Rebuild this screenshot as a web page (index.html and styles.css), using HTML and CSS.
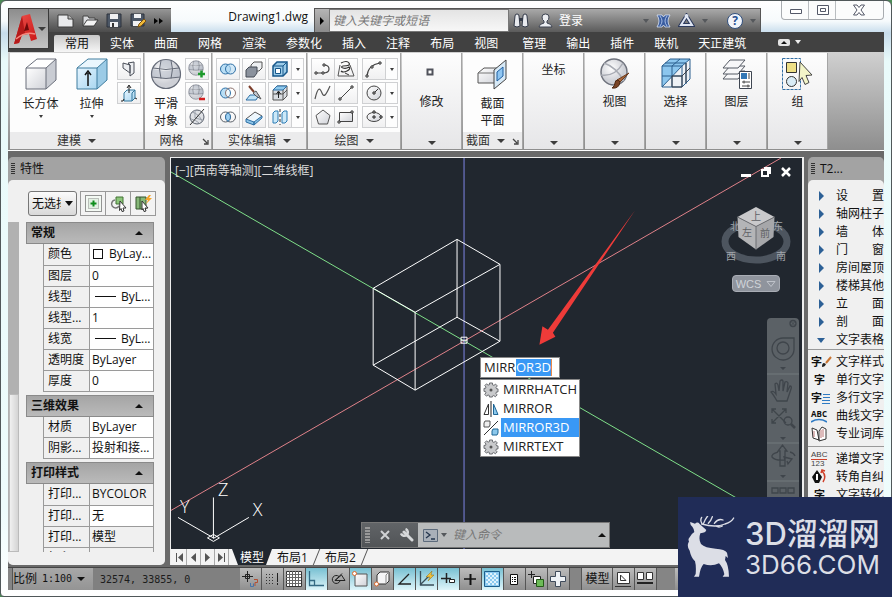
FILE: index.html
```html
<!DOCTYPE html>
<html lang="zh-CN">
<head>
<meta charset="utf-8">
<title>Drawing1.dwg</title>
<link rel="stylesheet" href="styles.css">
</head>
<body>
<svg class="defs" aria-hidden="true">
  <defs>
    <linearGradient id="gray" x1="0" y1="0" x2="1" y2="1"><stop offset="0" stop-color="#fff"/><stop offset="1" stop-color="#d0d2d8"/></linearGradient>
    <linearGradient id="blue" x1="0" y1="0" x2="1" y2="1"><stop offset="0" stop-color="#e6f5ff"/><stop offset="1" stop-color="#a9d6f0"/></linearGradient>
    <linearGradient id="red" x1="0" y1="0" x2="1" y2="1"><stop offset="0" stop-color="#f0554f"/><stop offset="1" stop-color="#c81414"/></linearGradient>
    <radialGradient id="ball" cx=".4" cy=".35"><stop offset="0" stop-color="#fff"/><stop offset="1" stop-color="#ced0d6"/></radialGradient>
    <symbol id="mesh" viewBox="0 0 32 32">
      <circle cx="16" cy="16" r="14.5" fill="url(#ball)"/>
      <path d="M11 2h10l1 8q-6 1-12 0zM2 11q4 1 8 1v8q-5 0-8-2zM30 11q-4 1-8 1v8q5 0 8-2zM10 12q6 1 12 0v8q-6 1-12 0z" fill="#b4bac6" opacity=".6"/>
      <path d="M3 10q13 3 26 0M1.500 19q14.500 3 29 0M11 2.500q-3 8 0 18M21 2.500q3 8 0 18" fill="none" stroke="#666c79"/>
      <circle cx="16" cy="16" r="14.500" fill="none" stroke="#666c79" stroke-width="1.200"/>
    </symbol>
    <symbol id="gear" viewBox="0 0 16 16">
      <path d="M6.500 1h3v1.800l1.500.6 1.500-1.300 1.800 1.800-1.300 1.600.6 1.400H15v3h-1.500l-.6 1.500 1.300 1.500-1.900 1.900-1.500-1.300-1.400.6V15h-3v-1.500L5 12.900l-1.500 1.300-1.800-1.900L3 10.900l-.6-1.500H1v-3h1.500L3 5 1.800 3.600l1.800-1.800L5 3.200l1.500-.6z" fill="#c9cacc" stroke="#6c6e72"/>
      <circle cx="8" cy="8" r="1.500" fill="#555"/>
    </symbol>
  </defs>
</svg>

<div class="window">
  <header class="top">
    <button class="app-button" aria-label="应用程序菜单">
      <svg width="25" height="32" viewBox="0 0 25 32"><path d="M1 31 9 3l8-2 7 25-6 2-2-7-7 1-3 8z" fill="url(#red)"/><path d="M9 3 12 20l-3 2-3 8-5 1z" fill="#b51a1a"/><path d="M11 18l3-9 2 8z" fill="#6e0a0a"/><path d="M3 26q9-8 19-5" fill="none" stroke="#f58a80" stroke-width="1.500"/></svg>
      <i class="down"></i>
    </button>
    <div class="titlebar">
      <div class="quick">
        <button aria-label="新建"><svg width="17" height="15" viewBox="0 0 17 15"><path d="M1 2h10l5 4v8H1z" fill="#e9eaec" stroke="#3c3c3c"/><path d="M11 2v4h5" fill="#bbb" stroke="#3c3c3c"/></svg></button>
        <button aria-label="打开"><svg width="17" height="15" viewBox="0 0 17 15"><path d="M1 13V3h5l1 2h6v2l3 0-4 6z" fill="#d9dadd" stroke="#444"/><path d="M1 13 5 7h11l-4 6z" fill="#f3f3f3" stroke="#444"/></svg></button>
        <button aria-label="保存"><svg width="16" height="15" viewBox="0 0 16 15"><path d="M1 1h14v13H1z" fill="#4c5766" stroke="#2d333c"/><path d="M4 1h8v5H4zM4 9h8v5H4z" fill="#f0f1f3"/><path d="M6 10h2v4H6z" fill="#333"/></svg></button>
        <button aria-label="另存为"><svg width="17" height="15" viewBox="0 0 17 15"><path d="M1 1h13v12H1z" fill="#4c5766" stroke="#2d333c"/><path d="M4 1h7v4H4zM3 8h9v5H3z" fill="#f0f1f3"/><path d="M8 14l1-3 5-5 2 2-5 5z" fill="#f0b93a" stroke="#7c5310"/></svg></button>
        <button aria-label="更多"><svg width="9" height="8" viewBox="0 0 9 8"><path d="M0 1l4 3-4 3zM5 1l4 3-4 3z" fill="#050505"/></svg></button>
      </div>
      <h1>Drawing1.dwg</h1>
      <div class="info">
        <button class="flyout" aria-label="展开搜索"><svg width="6" height="8" viewBox="0 0 6 8"><path d="M1 0l4 4-4 4z" fill="#000"/></svg></button>
        <input class="search" type="text" aria-label="搜索" placeholder="键入关键字或短语">
        <div class="account">
          <button aria-label="搜索"><svg width="16" height="15" viewBox="0 0 16 15"><path d="M2 3q0-2 2-2t2 2l1 10q-3 2-6 0zM10 3q0-2 2-2t2 2l1 10q-3 2-6 0z" fill="#e8eaee" stroke="#333a48"/><path d="M6 5h4v3H6z" fill="#333a48"/></svg></button>
          <button class="login"><svg width="15" height="15" viewBox="0 0 15 15"><path d="M1 14q0-3 5-4V8Q4 7 4 4q0-3 3.500-3T11 4q0 3-2 4v2q5 1 5 4z" fill="#eceef2" stroke="#3c4250"/></svg><span>登录</span></button>
          <i class="down dim far"></i>
          <button aria-label="Exchange"><svg width="15" height="14" viewBox="0 0 15 14"><path d="M1 1h5l1.500 2L9 1h5q-4 6 0 12H9l-1.500-2L6 13H1q4-6 0-12z" fill="#3a5da0" stroke="#dbe4f5" stroke-width=".8"/><path d="M4 2q4 5 0 10M11 2q-4 5 0 10" fill="none" stroke="#a9bfe6"/></svg></button>
          <button aria-label="联机"><svg width="17" height="15" viewBox="0 0 17 15"><path d="M8.500 3 3 12h11z" fill="none" stroke="#2c3a5d" stroke-width="4"/><path d="M8.500 3 3 12h11z" fill="none" stroke="#dfe5f2" stroke-width="2"/><circle cx="8.500" cy="3" r="2" fill="#dfe5f2"/></svg></button>
          <i class="down dim"></i>
          <button class="help" aria-label="帮助">?</button>
          <i class="down dim"></i>
        </div>
      </div>
      <div class="caption-buttons">
        <button aria-label="最小化"><svg width="14" height="12" viewBox="0 0 14 12"><path d="M1.500 5.500h11v4h-11z" fill="#fff" stroke="#545968"/></svg></button>
        <button aria-label="还原"><svg width="14" height="12" viewBox="0 0 14 12"><path d="M1.500 1.500h11v9h-11z" fill="#fff" stroke="#545968"/><path d="M4.500 4.500h5v3h-5z" fill="#fff" stroke="#545968"/></svg></button>
        <button class="wide" aria-label="关闭"><svg width="14" height="12" viewBox="0 0 14 12"><path d="M1.500 1h3.500l2 2.500L9 1h3.500L9 6l3.500 5H9L7 8.500 5 11H1.500L5 6z" fill="#fff" stroke="#545968"/></svg></button>
      </div>
    </div>
    <nav class="tabs">
      <a class="on" href="#">常用</a><a href="#">实体</a><a href="#">曲面</a><a href="#">网格</a><a href="#">渲染</a><a href="#">参数化</a><a href="#">插入</a><a href="#">注释</a><a href="#">布局</a><a href="#">视图</a><a class="gap" href="#">管理</a><a href="#">输出</a><a href="#">插件</a><a href="#">联机</a><a href="#">天正建筑</a>
      <button class="collapse" aria-label="最小化功能区"><span><i class="up"></i></span><i class="down light"></i></button>
    </nav>
  </header>

  <div class="ribbon">
    <section class="panel p-model">
      <div class="tools">
        <button class="big"><svg width="32" height="32" viewBox="0 0 32 32"><path d="M1 10 12 1h19L21 10z" fill="#fff"/><path d="M1 10h20v21H1z" fill="url(#gray)"/><path d="M21 10 31 1v21L21 31z" fill="#c9ccd3"/><path d="M1 10 12 1h19v21L21 31H1zM1 10h20M21 10 31 1M21 10v21" fill="none" stroke="#6a6f7b"/></svg><span>长方体</span><i class="down"></i></button>
        <button class="big"><svg width="32" height="32" viewBox="0 0 32 32"><path d="M1 10 12 1h19L21 10z" fill="#eaf6fd"/><path d="M1 10h20v21H1z" fill="url(#blue)"/><path d="M21 10 31 1v21L21 31z" fill="#9ccbe6"/><path d="M1 10 12 1h19v21L21 31H1zM1 10h20M21 10 31 1M21 10v21" fill="none" stroke="#3f7d9f"/><path d="M12 28V15M9 17l3-4 3 4" fill="none" stroke="#111" stroke-width="1.500"/></svg><span>拉伸</span><i class="down"></i></button>
        <div class="col">
          <button class="sm" aria-label="多段体"><svg width="18" height="18" viewBox="0 0 18 18"><path d="M3 3l7 2v8l-7-5zM8 3l6-1v11l-4 3V5z" fill="#eceef1" stroke="#4a4f59"/></svg></button>
          <button class="sm" aria-label="按住并拖动"><svg width="18" height="18" viewBox="0 0 18 18"><path d="M4 9l3-3h8v8l-3 3H4z" fill="url(#blue)" stroke="#33779c"/><path d="M12 17V9l3-3" fill="none" stroke="#33779c"/><path d="M1 17h2l1-2M17 15l-2-1M9 9V2M7 4l2-3 2 3" fill="none" stroke="#222"/></svg></button>
        </div>
      </div>
      <footer><span>建模</span><i class="down"></i></footer>
    </section>
    <section class="panel p-mesh">
      <div class="tools">
        <button class="big"><svg width="32" height="32"><use href="#mesh"/></svg><span>平滑</span><span>对象</span></button>
        <div class="col">
          <button class="sm" aria-label="提高平滑度"><svg width="18" height="18" viewBox="0 0 18 18"><use href="#mesh" width="16" height="16"/><path d="M10 14h7M13.500 10.500v7" stroke="#1d9a2c" stroke-width="2.500"/></svg></button>
          <button class="sm" aria-label="降低平滑度"><svg width="18" height="18" viewBox="0 0 18 18"><use href="#mesh" width="16" height="16"/><path d="M11 15h6" stroke="#d32020" stroke-width="2.500"/></svg></button>
          <button class="sm" aria-label="优化网格"><svg width="18" height="18" viewBox="0 0 18 18"><circle cx="9" cy="9" r="7" fill="#dfe1e5" stroke="#59606c"/><path d="M4 4q7 2 10 9M3 11q5 1 8 4M7 2v8l8 2" fill="none" stroke="#9ba1ab"/><path d="M2 17 16 1" stroke="#333"/></svg></button>
        </div>
      </div>
      <footer><span>网格</span><svg class="corner" width="7" height="7" viewBox="0 0 7 7"><path d="M1 1l4 4M6 2v4H2" fill="none" stroke="#444" stroke-width="1.300"/></svg></footer>
    </section>
    <section class="panel p-solid">
      <div class="tools">
        <div class="col">
          <button class="sm" aria-label="并集"><svg width="18" height="18" viewBox="0 0 18 18"><g fill="#b9def5" stroke="#2d6fa5"><circle cx="6.500" cy="9" r="5"/><circle cx="11.500" cy="9" r="5" fill-opacity=".6"/></g></svg></button>
          <button class="sm" aria-label="差集"><svg width="18" height="18" viewBox="0 0 18 18"><circle cx="6.500" cy="9" r="5" fill="#b9def5" stroke="#2d6fa5"/><circle cx="11.500" cy="9" r="5" fill="#fff" fill-opacity=".8" stroke="#8a6f6a"/><path d="M9 4.700a5 5 0 0 1 0 8.600" fill="none" stroke="#2d6fa5"/></svg></button>
          <button class="sm" aria-label="交集"><svg width="18" height="18" viewBox="0 0 18 18"><g fill="none" stroke="#5a6068"><circle cx="6.500" cy="9" r="5"/><circle cx="11.500" cy="9" r="5"/></g><path d="M9 4.700a5 5 0 0 1 0 8.600 5 5 0 0 1 0-8.600z" fill="#9dd0f2" stroke="#2d6fa5"/></svg></button>
        </div>
        <div class="col">
          <button class="sm" aria-label="干涉"><svg width="18" height="18" viewBox="0 0 18 18"><path d="M6 5l3-3h8v6l-3 3H6z" fill="#eef0f2" stroke="#555"/><path d="M1 10l3-3h8v6l-3 4H1z" fill="#8b929d" stroke="#454b55"/></svg></button>
          <button class="sm" aria-label="剖切"><svg width="18" height="18" viewBox="0 0 18 18"><path d="M1 16l4-5h9l-3 5z" fill="#bfe2f6" stroke="#2d6fa5"/><path d="M4 2l5 6" stroke="#7c3d2a" stroke-width="2"/><path d="M8 9l3-2 5 8-5-3z" fill="#c3c8d0" stroke="#555"/></svg></button>
          <button class="sm" aria-label="加厚"><svg width="18" height="18" viewBox="0 0 18 18"><path d="M1 11l9-7 7 4-8 8z" fill="#eef7fd" stroke="#555"/><path d="M1 11v3l8 3v-3zM9 17l8-7V8l-8 6z" fill="#8fc6e8" stroke="#2d6fa5"/></svg></button>
        </div>
        <div class="col">
          <div class="split"><button class="sm" aria-label="抽壳"><svg width="18" height="18" viewBox="0 0 18 18"><path d="M2 6l4-4h10v10l-4 4H2z" fill="#9bcbe8" stroke="#16578a" stroke-width="1.500"/><path d="M4.500 8.500h5v5h-5z" fill="#fff" stroke="#16578a"/><path d="M12 6v10M12 6l4-4M2 6h10" stroke="#16578a"/></svg></button><button class="more" aria-label="更多"><i class="down"></i></button></div>
          <div class="split"><button class="sm" aria-label="拉伸面"><svg width="18" height="18" viewBox="0 0 18 18"><path d="M2 6l4-4h10v10l-4 4H2z" fill="#d9dde2" stroke="#555"/><path d="M2 6l4-4h10l-4 4z" fill="#8fc9ec" stroke="#2d6fa5"/><path d="M2 10h10l4-4M12 6v10" fill="none" stroke="#555"/><path d="M7.500 14V8M5.500 10l2-3 2 3" fill="none" stroke="#222"/></svg></button><button class="more" aria-label="更多"><i class="down"></i></button></div>
          <div class="split"><button class="sm" aria-label="分割"><svg width="18" height="18" viewBox="0 0 18 18"><path d="M2 5l2-2h3v10l-2 2H2zM11 5l2-2h3v10l-2 2h-3z" fill="#cbe8f8" stroke="#2d7db5"/><path d="M9 1v16" stroke="#333" stroke-dasharray="3 2"/></svg></button><button class="more" aria-label="更多"><i class="down"></i></button></div>
        </div>
      </div>
      <footer><span>实体编辑</span><i class="down"></i></footer>
    </section>
    <section class="panel p-draw">
      <div class="tools">
        <div class="col">
          <div class="split"><button class="sm" aria-label="多段线"><svg width="18" height="18" viewBox="0 0 18 18"><path d="M2 13h7q6 0 6-4t-5-4" fill="none" stroke="#444" stroke-width="1.200"/><path d="M1 12h2v2H1zM8 12h2v2H8zM9 4h2v2H9z" fill="#fff" stroke="#333"/></svg></button><button class="sm" aria-label="螺旋"><svg width="18" height="18" viewBox="0 0 18 18"><path d="M3 5l-2 11h16L13 5" fill="none" stroke="#555"/><path d="M4 3q6-3 8 0t-6 3q-3 1 0 2t6-1q2 2-2 4t-6 0" fill="none" stroke="#333" stroke-width="1.200"/><path d="M8 13l4 2" stroke="#333"/></svg></button></div>
          <div class="split"><button class="sm" aria-label="样条曲线"><svg width="18" height="18" viewBox="0 0 18 18"><path d="M1 15C4 2 6 4 8 9s4 2 8-7" fill="none" stroke="#555" stroke-width="1.200"/></svg></button><button class="sm" aria-label="直线"><svg width="18" height="18" viewBox="0 0 18 18"><path d="M3 15 15 3" stroke="#444"/><path d="M2 14h2v2H2zM14 2h2v2h-2z" fill="#fff" stroke="#333"/></svg></button></div>
          <div class="split"><button class="sm" aria-label="多边形"><svg width="18" height="18" viewBox="0 0 18 18"><path d="M9 2l7 5.500L13.500 16h-9L2 7.500z" fill="url(#gray)" stroke="#555"/></svg></button><button class="sm" aria-label="矩形"><svg width="18" height="18" viewBox="0 0 18 18"><path d="M2.500 4.500h13v9h-13z" fill="url(#gray)" stroke="#444"/><path d="M1 13h2v2H1zM14 3h2v2h-2z" fill="#fff" stroke="#333"/></svg></button></div>
        </div>
        <div class="col">
          <div class="split"><button class="sm" aria-label="圆弧"><svg width="18" height="18" viewBox="0 0 18 18"><path d="M2 16Q3 5 15 3" fill="none" stroke="#444" stroke-width="1.200"/><path d="M1 15h2v2H1zM6 6h2v2H6zM14 2h2v2h-2z" fill="#fff" stroke="#333"/></svg></button><button class="more" aria-label="更多"><i class="down"></i></button></div>
          <div class="split"><button class="sm" aria-label="圆"><svg width="18" height="18" viewBox="0 0 18 18"><circle cx="9" cy="9" r="7" fill="url(#gray)" stroke="#444"/><path d="M9 9l4-4" stroke="#333"/><path d="M8 8h2v2H8z" fill="#fff" stroke="#222"/></svg></button><button class="more" aria-label="更多"><i class="down"></i></button></div>
          <div class="split"><button class="sm" aria-label="椭圆"><svg width="18" height="18" viewBox="0 0 18 18"><ellipse cx="9" cy="9" rx="7" ry="4.500" fill="url(#gray)" stroke="#444"/><path d="M9 7v4M7 9h4" stroke="#222"/><path d="M8 3h2v2H8zM15 8h2v2h-2z" fill="#fff" stroke="#222"/></svg></button><button class="more" aria-label="更多"><i class="down"></i></button></div>
        </div>
      </div>
      <footer><span>绘图</span><i class="down"></i></footer>
    </section>
    <section class="panel folded"><button><svg width="32" height="32" viewBox="0 0 32 32"><path d="M11.500 11.500h5v5h-5z" fill="#fff" stroke="#50525b" stroke-width="2"/></svg><span>修改</span><i class="down"></i></button></section>
    <section class="panel p-cut">
      <div class="tools">
        <button class="big"><svg width="32" height="32" viewBox="0 0 32 32"><path d="M1 15l6-5h15v12l-5 3H1z" fill="url(#gray)" stroke="#555"/><path d="M1 15h16" stroke="#777"/><path d="M17 12 29 2v19L17 31z" fill="#d7e9f6" stroke="#444"/><path d="M20 14l6-5v9l-6 5z" fill="#8fc6f2" stroke="#1f5ea0"/></svg><span>截面</span><span>平面</span></button>
      </div>
      <footer><span>截面</span><i class="down"></i><svg class="corner" width="7" height="7" viewBox="0 0 7 7"><path d="M1 1l4 4M6 2v4H2" fill="none" stroke="#444" stroke-width="1.300"/></svg></footer>
    </section>
    <section class="panel folded"><button><span>坐标</span><i class="down"></i></button></section>
    <section class="panel folded"><button><svg width="32" height="32" viewBox="0 0 32 32"><circle cx="15" cy="14" r="13" fill="url(#ball)" stroke="#70747e" stroke-width="1.500"/><path d="M5 5q12 4 20 18M2 17q14 2 22-12" fill="none" stroke="#a8abb3" stroke-width="1.500"/><path d="M30 15l-9 9-3-2z" fill="#a8663a" stroke="#6b3a1c"/><path d="M21 24q-1 7-8 6 3-2 3-5t3-3z" fill="#7a4426" stroke="#4e2912"/></svg><span>视图</span><i class="down"></i></button></section>
    <section class="panel folded"><button><svg width="32" height="32" viewBox="0 0 32 32"><path d="M2 8 10 1h20v20l-8 8H2z" fill="#8cc6ee"/><path d="M22 8 30 1v20l-8 8zM2 29 22 8v21z" fill="#eef1f5"/><path d="M2 8h20v21H2zM2 8l8-7h20v20l-8 8M22 8l8-7M2 18h20l8-8M12 29V8l8-7M5 5h21v21M2 29 22 8" fill="none" stroke="#2b5f8e"/><path d="M12 18h10v11H12zM22 18l8-8M26 5v20" fill="none" stroke="#3b3f47"/></svg><span>选择</span><i class="down"></i></button></section>
    <section class="panel folded"><button><svg width="32" height="32" viewBox="0 0 32 32"><g fill="#f7f7f9" stroke="#555a64"><path d="M2 21l7-8h15l-7 8z"/><path d="M2 16l7-8h15l-7 8z"/><path d="M2 10l7-8h15l-7 8z"/></g><path d="M18.500 13.500h12v17h-12z" fill="#fff" stroke="#3f4652"/><path d="M20 15h6v6h-6z" fill="#3277b5"/><path d="M28 15v6M21 24h8M21 28h8M23 22.500v3M27 26.500v3" stroke="#444"/></svg><span>图层</span><i class="down"></i></button></section>
    <section class="panel folded"><button><svg width="32" height="32" viewBox="0 0 32 32"><path d="M.500 .500h18v31h-18z" fill="none" stroke="#326ea3" stroke-dasharray="3 1"/><path d="M4.500 4.500h10v10h-10z" fill="#eedf86" stroke="#333"/><circle cx="9.500" cy="23.500" r="5" fill="#d9ecf6" stroke="#333"/><path d="M18 4 30 17l-6 .5 3 7-4 2-3-7-3 4z" fill="#f3f5c8" stroke="#444"/></svg><span>组</span><i class="down"></i></button></section>
  </div>

  <main class="work">
    <aside class="palette props">
      <h2><i class="grip"></i>特性</h2>
      <div class="palette-body">
        <div class="prop-tools">
          <label class="pick"><select aria-label="选择对象"><option>无选择</option></select></label>
          <div class="trio">
            <button aria-label="选择"><svg width="17" height="17" viewBox="0 0 17 17"><path d="M.500.500h16v16h-16z" fill="#f3f9f3" stroke="#333" stroke-dasharray="1 1"/><path d="M3.500 3.500h10v10h-10z" fill="#e3f1e3" stroke="#888" stroke-dasharray="1 1"/><path d="M5.500 8.500h6M8.500 5.500v6" stroke="#0e8d1c" stroke-width="2"/></svg></button>
            <button aria-label="快速选择"><svg width="17" height="17" viewBox="0 0 17 17"><path d="M6 2h7v7H6z" fill="#8cc67a" stroke="#427235"/><path d="M5 5a4 4 0 1 0 4 6" fill="none" stroke="#777" stroke-width="1.500"/><path d="M10 6l6 7-3 0 1 3-2 .5-1-3-1.500 2z" fill="#fff" stroke="#333"/></svg></button>
            <button aria-label="选择对象"><svg width="17" height="17" viewBox="0 0 17 17"><path d="M1 2h10v12H1zM5 2v12" fill="#86b878" stroke="#35542d"/><path d="M14 0l-4 5h3l-2 4 6-6h-3l2-3z" fill="#f6a52a"/><path d="M7 6l6 7-3 0 1 3-2 .5-1-3L7 15z" fill="#fff" stroke="#333"/></svg></button>
          </div>
        </div>
        <div class="prop-scroll">
          <div class="scrollbar"><i></i></div>
          <div class="groups">
            <section>
              <h3><button>常规<i class="up"></i></button></h3>
              <table>
                <tr><th>颜色</th><td><i class="swatch"></i>ByLay...</td></tr>
                <tr><th>图层</th><td>0</td></tr>
                <tr><th>线型</th><td><i class="stroke"></i>ByL...</td></tr>
                <tr><th>线型...</th><td>1</td></tr>
                <tr><th>线宽</th><td><i class="stroke"></i>ByL...</td></tr>
                <tr><th>透明度</th><td>ByLayer</td></tr>
                <tr><th>厚度</th><td>0</td></tr>
              </table>
            </section>
            <section>
              <h3><button>三维效果<i class="up"></i></button></h3>
              <table>
                <tr><th>材质</th><td>ByLayer</td></tr>
                <tr><th>阴影...</th><td>投射和接...</td></tr>
              </table>
            </section>
            <section>
              <h3><button>打印样式<i class="up"></i></button></h3>
              <table>
                <tr><th>打印...</th><td class="ro">BYCOLOR</td></tr>
                <tr><th>打印...</th><td>无</td></tr>
                <tr><th>打印...</th><td class="ro">模型</td></tr>
                <tr><th>打印...</th><td class="ro">不可用</td></tr>
              </table>
            </section>
          </div>
        </div>
      </div>
    </aside>

    <div class="document">
      <div class="viewport">
        <svg class="scene" viewBox="171 158 632 392" preserveAspectRatio="xMinYMin slice">
          <g fill="none">
            <path d="M171 511 782 158" stroke="#e0828a"/>
            <path d="M171 172 740 500" stroke="#7fe08a"/>
            <path d="M464.500 158v392" stroke="#7f86e6"/>
            <path d="M373.500 288.500 457.500 239.500 500.500 264.500V341.500L415.500 390.500 373.500 365.500zM373.500 288.500 415.500 312.500 500.500 264.500M415.500 312.500v78M457.500 239.500v78L373.500 365.500M457.500 317.500 500.500 341.500" stroke="#fff"/>
            <path d="M461.500 337.500h6v6h-6zM461.500 340.500h6" stroke="#fff"/>
            <path d="M213.500 498v41L249 518M213.500 538.500 178 518M213.500 535l6 3.500-6 3.500-6-3.500z" stroke="#fff"/>
          </g>
          <g class="axis"><text x="218" y="497">Z</text><text x="253" y="517">X</text><text x="180" y="514">Y</text></g>
          <path d="M540 345 543 326.500 548.500 330 636 210 553.500 333 556 337z" fill="#ee3b39"/>
        </svg>
        <div class="view-label">[−][西南等轴测][二维线框]</div>
        <div class="view-buttons">
          <button aria-label="最小化"><svg width="10" height="10" viewBox="0 0 10 10"><path d="M0 7h10v3H0z" fill="#fff"/></svg></button>
          <button aria-label="还原"><svg width="10" height="10" viewBox="0 0 10 10"><path d="M3 1h6v6M1 3h6v6H1z" fill="none" stroke="#fff" stroke-width="2"/></svg></button>
          <button aria-label="关闭"><svg width="10" height="10" viewBox="0 0 10 10"><path d="M1 1l8 8M9 1 1 9" stroke="#fff" stroke-width="2.500"/></svg></button>
        </div>
        <div class="cube">
          <svg width="72" height="62" viewBox="720 205 72 62">
            <ellipse cx="756" cy="241.500" rx="31" ry="18.500" fill="none" stroke="#4d555f" stroke-width="7"/>
            <g class="compass"><text x="726" y="260">西</text><text x="776" y="260">南</text><text x="730" y="230">北</text><text x="773" y="230">东</text></g>
            <path d="M756 207 774.500 217 756 226.500 737.500 217z" fill="#c9c9cb"/><path d="M737.500 217 756 226.500v23L738.500 237z" fill="#b4b5b7"/><path d="M774.500 217 756 226.500v23L773.500 237z" fill="#a6a7aa"/>
            <path d="M737.500 217 756 226.500 774.500 217M756 226.500v23" fill="none" stroke="#6d6f73"/>
            <g class="face"><text x="751" y="220">上</text><text x="742" y="236">左</text><text x="760" y="237">前</text></g>
          </svg>
          <button class="wcs">WCS<svg width="10" height="6" viewBox="0 0 10 6"><path d="M1 .500h8l-4 5z" fill="none" stroke="#bfc3ca"/></svg></button>
        </div>
        <div class="navbar">
          <svg width="32" height="200" viewBox="767 318 32 200" fill="none" stroke="#3f454b" stroke-width="1.300">
            <circle cx="793" cy="323.500" r="3"/><path d="M791 321.500l4 4m0-4-4 4" stroke-width=".8"/>
            <path d="M783 338h11v10a11 11 0 1 1-11-10z"/><circle cx="783" cy="348" r="6"/>
            <path d="M780 367h6l-3 3zM780 437h6l-3 3zM780 475h6l-3 3z" fill="#3f454b" stroke="none"/>
            <path d="M767 374h32M767 443h32M767 481h32" stroke="#6b7176"/>
            <path d="M777 401q-4-7-6-9 2-2 5 2l-1-10q2-2 3 1l1 6 1-10q2-2 3 0v10l2-9q2-1 3 1l-1 9 3-6q2 0 1 3l-4 12z"/>
            <path d="M772 409l14 14M786 409l-14 14M772 413v-4h4M782 409h4v4M772 419v4h4"/><circle cx="788" cy="421" r="4"/><path d="M791 424l4 4" stroke-width="2.500"/>
            <path d="M780 466v-15h-2l4.500-6 4.500 6h-2v15zM778 452q-7 2-6 5 3 4 13 3l-1-3 8 2-4 5-1-3M790 452q4 1 5 4"/>
            <path d="M772 488h6v5h-6zM780 488h6v5h-6zM788 488h6v5h-6z"/>
          </svg>
        </div>
        <div class="completion">
          <div class="entry"><input type="text" aria-label="命令" value="MIRR"><mark>OR3D</mark></div>
          <ul>
            <li><svg width="16" height="16"><use href="#gear"/></svg><span>MIRRHATCH</span></li>
            <li><svg width="16" height="16" viewBox="0 0 16 16"><path d="M5.500 3v10.500H1z" fill="#fff" stroke="#333"/><path d="M10.500 3v10.500H15z" fill="#8cc8ec" stroke="#1f6695"/><path d="M8 0v16" stroke="#222"/></svg><span>MIRROR</span></li>
            <li class="on"><svg width="16" height="16" viewBox="0 0 16 16"><path d="M1 3l1-2h5v4L6 7H1z" fill="#eee" stroke="#555"/><path d="M9 11l1-2h5v4l-1 2H9z" fill="#8cc8ec" stroke="#1f6695"/><path d="M1 15 15 1" stroke="#333"/></svg><span>MIRROR3D</span></li>
            <li><svg width="16" height="16"><use href="#gear"/></svg><span>MIRRTEXT</span></li>
          </ul>
        </div>
        <div class="command">
          <div class="command-tools">
            <i class="grip light"></i>
            <button aria-label="关闭"><svg width="10" height="10" viewBox="0 0 10 10"><path d="M1 1l8 8M9 1 1 9" stroke="#d0d2d4" stroke-width="2"/></svg></button>
            <button aria-label="自定义"><svg width="14" height="14" viewBox="0 0 14 14"><path d="M4 4l8 8" stroke="#d6d8da" stroke-width="3" stroke-linecap="round"/><path d="M5.500 1A3.500 3.500 0 1 1 1 5.500" fill="none" stroke="#d6d8da" stroke-width="2.500"/></svg></button>
          </div>
          <span class="prompt"><svg width="15" height="13" viewBox="0 0 15 13"><path d="M.500.500h14v12H.500z" fill="#a9b0b9" stroke="#5d6b7c"/><path d="M3 3l4 3-4 3M8 10h4" fill="none" stroke="#25364d" stroke-width="1.300"/></svg><i class="down dim"></i></span>
          <input type="text" aria-label="命令行" placeholder="键入命令">
          <button class="recent" aria-label="最近使用的命令"><i class="up"></i></button>
        </div>
      </div>
      <div class="sheet-tabs">
        <div class="sheet-nav">
          <button aria-label="第一个"><svg width="9" height="9" viewBox="0 0 9 9"><path d="M1.500 0v9" stroke="#555"/><path d="M8 0v9L3 4.500z" fill="#555"/></svg></button>
          <button aria-label="上一个"><svg width="9" height="9" viewBox="0 0 9 9"><path d="M7 0v9L2 4.500z" fill="#555"/></svg></button>
          <button aria-label="下一个"><svg width="9" height="9" viewBox="0 0 9 9"><path d="M2 0v9l5-4.500z" fill="#555"/></svg></button>
          <button aria-label="最后一个"><svg width="9" height="9" viewBox="0 0 9 9"><path d="M7.500 0v9" stroke="#555"/><path d="M1 0v9l5-4.500z" fill="#555"/></svg></button>
        </div>
        <a class="on" href="#">模型</a><a href="#">布局1</a><i class="slash"></i><a href="#">布局2</a><i class="slash"></i>
      </div>
    </div>

    <aside class="palette menu">
      <h2><i class="grip"></i>T2...</h2>
      <div class="palette-body">
        <ul>
          <li><i class="tri"></i>设　　置</li>
          <li><i class="tri"></i>轴网柱子</li>
          <li><i class="tri"></i>墙　　体</li>
          <li><i class="tri"></i>门　　窗</li>
          <li><i class="tri"></i>房间屋顶</li>
          <li><i class="tri"></i>楼梯其他</li>
          <li><i class="tri"></i>立　　面</li>
          <li><i class="tri"></i>剖　　面</li>
          <li><i class="tri open"></i>文字表格</li>
        </ul>
        <ul class="sub">
          <li><b>字<svg width="10" height="12" viewBox="0 0 10 12"><path d="M0 11q0-4 2-4l2 1q-1 3-4 3z" fill="#222"/><path d="M4 7l5-6" stroke="#c87432" stroke-width="2"/></svg></b>文字样式</li>
          <li><b>字</b>单行文字</li>
          <li><b>字<svg width="8" height="12" viewBox="0 0 8 12"><path d="M1 2.500h7M1 5.500h7M0 8.500h8M0 11.500h8" stroke="#2f7bc4"/></svg></b>多行文字</li>
          <li><b class="abc">ABC<svg width="16" height="5" viewBox="0 0 16 5"><path d="M0 4q8-5 16 0" fill="none" stroke="#2f7bc4" stroke-width="1.500"/></svg></b>曲线文字</li>
          <li><svg width="16" height="16" viewBox="0 0 16 16"><path d="M1 2l5 2 2 10-6-2zM15 3l-4-2-3 4v10l7-2z" fill="#fff" stroke="#333"/><path d="M10 4v8M12 3v8M3 5v6" stroke="#b77"/></svg>专业词库</li>
        </ul>
        <ul class="sub">
          <li><b class="count"><span>ABC</span><span>123</span></b>递增文字</li>
          <li><svg width="16" height="16" viewBox="0 0 16 16"><path d="M6 1 1 8l3 6h4l3-6z" fill="#111"/><path d="M6 5v6" stroke="#fff" stroke-width="2"/><path d="M11 2q5 5 1 11M10 4l1-3 3 1" fill="none" stroke="#d0402a" stroke-width="1.500"/></svg>转角自纠</li>
          <li><b>字</b>文字转化</li>
        </ul>
      </div>
    </aside>
  </main>

  <footer class="status">
    <button class="scale"><span>比例</span><span class="mono">1:100</span><i class="down"></i></button>
    <output class="mono">32574, 33855, 0</output>
    <div class="toggles">
      <button aria-label="推断约束"><svg width="18" height="18" viewBox="0 0 18 18"><path d="M1 6.500h11M6.500 1v11" stroke="#222"/><path d="M4.500 4.500h4v4h-4z" fill="none" stroke="#222"/><path d="M13 9.500h3.500v3H14V16" fill="none" stroke="#b34f32"/><path d="M9.500 13v3.500h3v-3" fill="none" stroke="#4774a8"/></svg></button>
      <button aria-label="捕捉"><svg width="18" height="18" viewBox="0 0 18 18"><path d="M3 4.500h9M3 7.500h9M3 10.500h9M3 13.500h9" stroke="#333" stroke-dasharray="1 2"/><path d="M14.500 3v12" stroke="#222" stroke-dasharray="9 1"/></svg></button>
      <button aria-label="栅格"><svg width="18" height="18" viewBox="0 0 18 18"><path d="M1.500 1.500h15v15h-15z" fill="#fff" stroke="#333"/><path d="M1 4.500h15M1 7.500h15M1 10.500h15M1 13.500h15M4.500 1v15M7.500 1v15M10.500 1v15M13.500 1v15" stroke="#666"/></svg></button>
      <button class="on" aria-label="正交"><svg width="18" height="18" viewBox="0 0 18 18"><path d="M2.500 1v14.500H17M2 10.500h5.500V15" fill="none" stroke="#356a83" stroke-width="1.300"/></svg></button>
      <button aria-label="极轴"><svg width="18" height="18" viewBox="0 0 18 18"><path d="M10 6.500A4 4 0 1 0 11 11M6 10.500h10L12.500 5zM6 10.500l7-7" fill="none" stroke="#222"/></svg></button>
      <button class="on" aria-label="对象捕捉"><svg width="18" height="18" viewBox="0 0 18 18"><path d="M4 4h12v12H4z" fill="url(#gray)" stroke="#555"/><circle cx="3.500" cy="3.500" r="2" fill="#fff" stroke="#dc6a2d"/></svg></button>
      <button aria-label="三维捕捉"><svg width="18" height="18" viewBox="0 0 18 18"><path d="M4 5l3-3h9v9l-3 3H4z" fill="#f5f5f6" stroke="#333"/><path d="M13 14V5l3-3" fill="none" stroke="#888"/><circle cx="3.500" cy="14" r="2" fill="#fff" stroke="#dc6a2d"/></svg></button>
      <button class="on" aria-label="对象追踪"><svg width="18" height="18" viewBox="0 0 18 18"><path d="M14 4 4 14h12" fill="none" stroke="#222" stroke-width="1.300"/></svg></button>
      <button class="on" aria-label="动态 UCS"><svg width="18" height="18" viewBox="0 0 18 18"><path d="M3.500 1v14H17M3 15l9-9" fill="none" stroke="#3a4f5a" stroke-width="1.300"/><path d="M15 1l-6 6h4l-2 4 6-6h-3z" fill="#f2c23b" stroke="#8d6a12" stroke-width=".5"/></svg></button>
      <button class="on" aria-label="动态输入"><svg width="18" height="18" viewBox="0 0 18 18"><path d="M2 8.500h10M7.500 3v10" stroke="#222" stroke-width="1.500"/><path d="M10.500 9.500h5v3h-5z" fill="#fff" stroke="#222"/></svg></button>
      <button aria-label="线宽"><svg width="18" height="18" viewBox="0 0 18 18"><path d="M3 9h12" stroke="#111" stroke-width="1.500"/><path d="M9.500 4v11" stroke="#111" stroke-width="2"/></svg></button>
      <button class="on" aria-label="透明度"><svg width="18" height="18" viewBox="0 0 18 18"><path d="M1.500 1.500h15v15h-15z" fill="#8ccaf0" stroke="#1d5f8d"/><path d="M3 4h12M3 8h12M3 12h12" stroke="#dff2fd" stroke-width="2" stroke-dasharray="2 2"/><path d="M5 6h10M5 10h10M5 14h10" stroke="#dff2fd" stroke-width="2" stroke-dasharray="2 2"/></svg></button>
      <button aria-label="快捷特性"><svg width="18" height="18" viewBox="0 0 18 18"><path d="M5.500 4.500h7v10h-7z" fill="#fff" stroke="#111"/><path d="M7 7.500h1m1 0h2M7 9.500h1m1 0h2M7 11.500h1m1 0h2" stroke="#111"/></svg></button>
      <button aria-label="选择循环"><svg width="18" height="18" viewBox="0 0 18 18"><path d="M1 4.500h7M4.500 1v7" stroke="#222"/><path d="M6.500 6.500h7v7h-7z" fill="#fff" stroke="#222"/><path d="M9.500 9.500h7v7h-7z" fill="#6dbb58" stroke="#255c18"/></svg></button>
      <button aria-label="注释监视器"><svg width="18" height="18" viewBox="0 0 18 18"><path d="M6.500 1.500h5v5h5v5h-5v5h-5v-5h-5v-5h5z" fill="#eef2f6" stroke="#3f4b5b"/></svg></button>
    </div>
    <div class="space">
      <button class="text">模型</button>
      <button aria-label="快速查看布局"><svg width="18" height="18" viewBox="0 0 18 18"><path d="M3.500 2.500h12v11h-12z" fill="#fff" stroke="#333"/><path d="M6.500 5v5.500H12z" fill="none" stroke="#333"/><path d="M1 16.500h16" stroke="#333"/></svg></button>
      <button aria-label="快速查看图形"><svg width="18" height="18" viewBox="0 0 18 18"><path d="M1.500 2.500h6v7h-6zM10.500 2.500h6v7h-6z" fill="#fff" stroke="#333"/><path d="M1 13h16" stroke="#222" stroke-width="2"/></svg></button>
    </div>
    <div class="rest"></div>
  </footer>
</div>

<div class="brand">
  <svg width="48" height="62" viewBox="26 60 144 186" aria-hidden="true">
    <path d="M36 78 50 83Q58 76 64 84L84 102Q82 110 74 110L66 112Q60 130 68 144 80 156 112 158 140 160 146 170L149 186 142 180 140 192Q151 206 152 242L133 242 138 235Q134 214 122 202 100 212 76 204 66 214 62 242L47 242 52 234Q54 210 50 196 38 184 34 164 24 152 32 136 28 130 34 124 38 114 48 108 47 98 42 92 34 86 36 78z" fill="#dcdee6"/>
    <path d="M72 84Q64 74 70 64M76 82Q80 70 88 60M90 82Q98 74 102 62M70 84Q112 96 140 84 160 78 166 66M108 82Q120 66 134 72M112 90q10 6 20 0" fill="none" stroke="#dcdee6" stroke-width="4" stroke-linecap="round"/>
  </svg>
  <div><strong>3D溜溜网</strong><span>3D66.COM</span></div>
</div>
</body>
</html>
```
FILE: styles.css
```css
* { box-sizing: border-box; }

body {
  margin: 0;
  font: 12px/16px "Open Sans", "Noto Sans CJK SC", sans-serif;
  color: #111;
  background: #4b8a55;
}

button, input, select {
  margin: 0;
  padding: 0;
  border: 0;
  background: none;
  font: inherit;
  color: inherit;
  outline: 0;
}

a { color: inherit; text-decoration: none; }
ul { list-style: none; margin: 0; padding: 0; }
h1, h2, h3 { margin: 0; font: inherit; }
svg { display: block; flex: none; }
.defs { position: absolute; width: 0; height: 0; }

.up, .down {
  flex: none;
  width: 0;
  height: 0;
  border: 4px solid transparent;
}
.down { border-top-color: #3c3c3c; border-bottom-width: 0; }
.up { border-bottom-color: #111; border-top-width: 0; }
.dim { border-top-color: #55585c; border-left-width: 3px; border-right-width: 3px; }
.light { border-top-color: #eee; border-left-width: 3px; border-right-width: 3px; }

.grip {
  flex: none;
  width: 4px;
  height: 12px;
  background: repeating-linear-gradient(#333 0 1px, transparent 1px 2px);
}

.window {
  display: flex;
  flex-direction: column;
  height: 100vh;
  overflow: hidden;
  padding: 0 7px 6px;
  border: 1px solid #50585a;
  border-radius: 6px 6px 4px 4px;
  background: linear-gradient(#fff 0, #f6fafc 20px, #c7dcec 32px, #e9fafa 60px, #eefcfc 85%, #fff);
}

/* title bar and tabs */
.top {
  display: grid;
  grid-template-columns: 41px minmax(0, 1fr);
  grid-template-rows: 31px 20px;
  flex: none;
}
.app-button {
  grid-area: 1 / 1 / 3 / 2;
  z-index: 1;
  margin: 7px 0 3px;
  display: flex;
  align-items: center;
  justify-content: space-between;
  padding: 0 4px;
  border: 1px solid #3a3a3a;
  background: linear-gradient(#8d8d8d, #c4c4c4);
}
.top::before {
  content: "";
  grid-area: 2 / 1 / 3 / 2;
  background: #414141;
}
.titlebar { grid-area: 1 / 2 / 2 / 3; display: flex; align-items: flex-start; }
.quick {
  display: flex;
  align-items: center;
  justify-content: space-between;
  width: 122px;
  height: 24px;
  margin-top: 7px;
  padding: 0 8px;
  border-top: 1px solid #444;
  background: linear-gradient(#969696, #4c4c4c);
}
.titlebar h1 {
  flex: 1;
  padding: 8px 6px 0 0;
  text-align: right;
}
.info {
  display: flex;
  height: 24px;
  margin-top: 7px;
  border: 1px solid #555;
  border-bottom: 0;
  background: #a9a9a9;
}
.flyout { padding: 0 4px; background: linear-gradient(#b5b5b5, #8b8b8b); }
.search {
  width: 180px;
  padding: 0 3px;
  border: 1px solid #777;
  background: linear-gradient(#e4e4e4, #f7f7f7);
  font-style: italic;
}
.search::placeholder { color: #777; opacity: 1; }
.account {
  display: flex;
  align-items: center;
  gap: 7px;
  width: 251px;
  padding: 0 4px 0 4px;
  background: linear-gradient(#a9a9a9, #5b5b5b);
}
.login { display: flex; align-items: center; gap: 6px; margin-left: 2px; color: #fff; }
.far { margin-left: auto; }
.help {
  width: 16px;
  height: 16px;
  margin-left: 12px;
  border: 1px solid #31507e;
  border-radius: 50%;
  background: #f1f4fa;
  color: #264f93;
  font-weight: bold;
  line-height: 14px;
}
.caption-buttons {
  display: flex;
  height: 19px;
  margin: 0 0 0 20px;
  border: 1px solid #a8acb0;
  border-top: 0;
  border-radius: 0 0 4px 4px;
  background: #fbfcfc;
}
.caption-buttons button { width: 27px; padding-left: 7px; border-right: 1px solid #b9bdc0; }
.caption-buttons .wide { width: 47px; padding-left: 16px; border-right: 0; }

.tabs {
  grid-area: 2 / 2 / 3 / 3;
  display: flex;
  align-items: stretch;
  padding-left: 5px;
  background: #414141;
  color: #fff;
  white-space: nowrap;
}
.tabs a { padding: 4px 10px 0; }
.tabs .on {
  padding: 1px 11px 0;
  margin-top: 3px;
  border-radius: 2px 2px 0 0;
  background: linear-gradient(#c9c9c9, #f6f6f6);
  color: #111;
}
.tabs .gap { margin-left: 4px; }
.collapse { display: flex; align-items: center; gap: 5px; margin-left: 22px; }
.collapse span { padding: 2px 3px; border-radius: 2px; background: #e3e3e3; }
.collapse .up { display: block; border-width: 0 3px 3px; }

/* ribbon */
.ribbon {
  display: flex;
  gap: 1px;
  flex: none;
  height: 99px;
  padding: 1px 0 1px 2px;
  border-bottom: 1px solid #fff;
  background: linear-gradient(#d0d0d0, #8e8e8e);
}
.panel {
  flex: 0 0 60px;
  display: flex;
  flex-direction: column;
  border-right: 1px solid #a5a5a5;
  background: #fdfdfd;
}
.p-model { flex-basis: 134px; }
.p-mesh { flex-basis: 67px; }
.p-solid { flex-basis: 94px; }
.p-draw { flex-basis: 93px; }
.tools {
  flex: 1;
  display: flex;
  justify-content: space-between;
  padding: 5px 2px 0 5px;
}
.p-solid .tools, .p-draw .tools { padding: 5px 2px 0 3px; }
.p-model .big { width: 51px; }
.p-cut .tools { justify-content: center; padding: 5px 0 0; }
.panel footer {
  display: flex;
  align-items: center;
  justify-content: center;
  gap: 7px;
  height: 17px;
  padding-top: 1px;
  background: #ebebec;
  color: #333;
}
.p-mesh footer { gap: 18px; padding-left: 12px; }
.big {
  display: flex;
  flex-direction: column;
  align-items: center;
  color: #222;
}
.big span { line-height: 17px; }
.big svg + span { margin-top: 5px; }
.big .down { margin-top: 3px; }
.big .down, .more .down { border-left-width: 2px; border-right-width: 2px; border-top-width: 3px; }
.col { display: flex; flex-direction: column; gap: 2px; }
.sm {
  width: 24px;
  height: 22px;
  padding: 1px 2px;
  border: 1px solid #cfd0d2;
  background: linear-gradient(#fff, #f0f0f1);
}
.split { display: flex; }
.split .sm + .sm { margin-left: -1px; }
.more {
  display: flex;
  align-items: center;
  justify-content: center;
  width: 13px;
  margin-left: -1px;
  border: 1px solid #cfd0d2;
}
.folded { background: linear-gradient(#fdfdfd, #e6e6e8); }
.folded button {
  flex: 1;
  display: flex;
  flex-direction: column;
  align-items: center;
  gap: 4px;
  padding: 5px 0 4px;
  color: #222;
}
.folded span { padding-top: 4px; }
.folded svg + span { padding-top: 0; }
.folded .down { margin-top: auto; }

/* work area */
.work {
  flex: 1;
  min-height: 0;
  display: grid;
  grid-template-columns: 157px minmax(0, 1fr) 76px;
  grid-template-rows: minmax(0, 1fr);
  gap: 4px;
  padding: 6px 0 2px;
  background: #6a6a6a;
}
.palette { display: flex; flex-direction: column; min-height: 0; background: #a3a3a3; border-radius: 5px; }
.palette h2 {
  display: flex;
  align-items: center;
  gap: 5px;
  height: 23px;
  padding: 1px 0 0 3px;
  flex: none;
}
.palette-body {
  flex: 1;
  min-height: 0;
  display: flex;
  flex-direction: column;
  border-radius: 5px;
  background: #f0f0f0;
}
.prop-tools { display: flex; gap: 3px; padding: 11px 0 6px 20px; }
.pick {
  position: relative;
  width: 49px;
  border: 1px solid #777;
  border-radius: 3px;
  background: linear-gradient(#fbfbfb, #d9d9d9);
}
.pick::after {
  content: "";
  position: absolute;
  right: 3px;
  top: 9px;
  border: 4px solid transparent;
  border-top: 5px solid #111;
  border-bottom: 0;
}
.pick select { appearance: none; width: 32px; height: 23px; padding-left: 3px; overflow: hidden; }
.trio { display: flex; }
.trio button {
  width: 26px;
  height: 25px;
  margin-right: -1px;
  padding-left: 4px;
  border: 1px solid #999;
  background: #f3f3f3;
}
.prop-scroll {
  flex: 1;
  min-height: 0;
  display: flex;
  gap: 7px;
  margin-bottom: 13px;
  overflow: hidden;
}
.scrollbar {
  display: flex;
  flex-direction: column;
  width: 11px;
  padding-left: 1px;
  background: #b1b1b1;
}
.scrollbar i { height: 48%; margin-top: auto; border: 1px solid #bbb; background: linear-gradient(90deg, #f0f0f0, #d4d4d4); }
.groups { width: 128px; display: flex; flex-direction: column; gap: 3px; }
.groups h3 button {
  display: flex;
  align-items: center;
  justify-content: space-between;
  width: 100%;
  height: 22px;
  padding: 0 10px 0 4px;
  border: 1px solid #8a8a8a;
  background: linear-gradient(#a5a5a5, #bababa);
  font-weight: bold;
}
.groups table {
  width: 111px;
  margin-left: 17px;
  border-collapse: collapse;
  table-layout: fixed;
}
.groups th, .groups td {
  height: 21px;
  padding: 0 3px;
  border: 1px solid #9a9a9a;
  overflow: hidden;
  text-align: left;
  font-weight: normal;
  white-space: nowrap;
}
.groups th { width: 46px; padding: 0 4px; }
.groups tr:first-child > * { border-top: 0; }
.groups td { padding: 0 2px; background: #fff; }
.groups .ro { background: #f0f0f0; }
.swatch { display: inline-block; width: 10px; height: 10px; margin: 0 6px 0 1px; border: 1px solid #111; vertical-align: -1px; }
.stroke { display: inline-block; width: 21px; margin: 0 5px 0 3px; border-top: 1px solid #111; vertical-align: 4px; }

.document {
  display: flex;
  flex-direction: column;
  min-height: 0;
  margin-left: 1px;
  border: 1px solid #eee;
  border-width: 1px 2px 0 1px;
}
.viewport { position: relative; flex: 1; min-height: 0; overflow: hidden; background: #21272f; }
.scene { position: absolute; inset: 0; width: 100%; height: 100%; }
.axis { font: 300 18px "Open Sans", sans-serif; fill: #fff; }
.view-label { position: absolute; left: 4px; top: 5px; color: #dcdcdc; }
.view-buttons { position: absolute; right: 11px; top: 9px; display: flex; gap: 10px; }
.cube { position: absolute; right: 10px; top: 47px; display: flex; flex-direction: column; align-items: center; gap: 8px; }
.compass { font-size: 10px; fill: #a2a6ab; }
.face { font-size: 10px; fill: #5f6165; }
.wcs {
  display: flex;
  align-items: center;
  gap: 5px;
  height: 17px;
  padding: 0 3px;
  border: 1px solid #a9adb5;
  border-radius: 4px;
  background: #8f949d;
  color: #d0d3d8;
  font: 11px "Liberation Sans", sans-serif;
}
.navbar {
  position: absolute;
  right: 3px;
  top: 160px;
  border-radius: 4px;
  background: #5b6166;
}

.completion { position: absolute; left: 309px; top: 199px; font-size: 13px; color: #222; }
.entry {
  display: flex;
  align-items: center;
  width: 80px;
  height: 21px;
  padding-left: 3px;
  border: 1px solid #888;
  background: #fff;
}
.entry input { width: 32px; line-height: 17px; }
.entry mark { background: #3998f5; color: #fff; line-height: 17px; border-right: 1px solid #e8894a; }
.completion ul { width: 100px; margin-top: 1px; border: 1px solid #888; background: #fff; }
.completion li { display: flex; align-items: center; gap: 2px; padding-left: 2px; }
.completion li span { flex: 1; padding-left: 2px; line-height: 19px; }
.completion .on span { background: #3998f5; color: #fff; }

.command {
  position: absolute;
  left: 190px;
  right: 192px;
  bottom: 1px;
  display: flex;
  height: 26px;
  border: 1px solid #777;
  background: #b9bbbc;
}
.command-tools {
  display: flex;
  align-items: center;
  gap: 10px;
  padding: 0 4px 0 3px;
  background: linear-gradient(#616467, #515457);
}
.grip.light { width: 5px; height: 16px; background: repeating-linear-gradient(#999 0 2px, transparent 2px 3px); }
.prompt { display: flex; align-items: center; gap: 3px; padding: 0 6px 0 5px; }
.command input { flex: 1; min-width: 0; font-style: italic; }
.command input::placeholder { color: #777; opacity: 1; }
.recent { display: flex; align-items: center; padding: 0 3px; }

.sheet-tabs { display: flex; align-items: stretch; flex: none; height: 16px; background: #f3f3f3; }
.sheet-nav { display: flex; margin: 0 3px 0 2px; }
.sheet-nav button { width: 14px; padding-left: 2px; border-right: 1px solid #aaa; }
.sheet-tabs a { padding: 0 5px; line-height: 17px; }
.sheet-tabs .on {
  padding: 0 8px;
  background: #21272f;
  color: #fff;
  clip-path: polygon(0 0, 100% 0, calc(100% - 6px) 100%, 6px 100%);
}
.slash { width: 1px; margin: 0 3px; background: #555; transform: skewX(-22deg); }

/* side menu */
.menu { overflow: hidden; }
.menu .palette-body { padding-top: 7px; border-radius: 5px 5px 0 0; overflow: hidden; }
.menu li {
  display: grid;
  grid-template-columns: 20px 48px;
  align-items: center;
  height: 18px;
  padding-left: 3px;
  column-gap: 5px;
  white-space: nowrap;
}
.tri { justify-self: center; border: 5px solid transparent; border-left-color: #2c6096; border-right-width: 0; }
.tri.open { border: 4px solid transparent; border-top: 5px solid #2c6096; border-bottom: 0; }
.sub { padding: 3px 0; border-top: 1px solid #999; }
.menu b { display: flex; align-items: center; font-size: 11px; line-height: 14px; }
.menu b:not(:has(svg)) { padding-left: 3px; }
.menu b.abc { flex-direction: column; align-items: flex-start; font-size: 8px; line-height: 8px; }
.menu b.count { flex-direction: column; align-items: flex-start; padding-left: 0; font: 8px/8px "Liberation Sans", sans-serif; color: #444; }
.count span:first-child { border-bottom: 1px solid #d0402a; }

/* status bar */
.status {
  display: flex;
  flex: none;
  height: 23px;
  border-top: 1px solid #444;
  background: #858585;
}
.mono { font: 10px/24px "DejaVu Sans Mono", monospace; }
.scale {
  display: flex;
  align-items: center;
  gap: 5px;
  margin-left: 4px;
  width: 81px;
  border-left: 1px solid #555;
  background: linear-gradient(#a8a8a8, #949494);
}
.scale .down { border-top-color: #111; }
.status output { width: 147px; padding-left: 7px; background: #808080; color: #1c1c1c; }
.toggles, .space { display: flex; }
.toggles button, .space button {
  width: 22px;
  padding-left: 1px;
  border-right: 1px solid #555;
  background: linear-gradient(#bcbcbc, #8f8f8f);
}
.toggles .on { background: linear-gradient(#78c0d2, #def5fa); }
.space { margin-left: 11px; border-left: 1px solid #555; }
.space .text { width: 31px; white-space: nowrap; }
.rest { flex: 1; margin-left: 18px; background: linear-gradient(#bcbcbc, #8f8f8f); }

/* brand plate over the lower right corner */
.brand {
  position: absolute;
  right: 0;
  bottom: 0;
  display: flex;
  align-items: center;
  gap: 10px;
  width: 214px;
  height: 100px;
  padding-left: 9px;
  background: #202c57;
  color: #dcdee6;
  font-family: Inter, "Noto Sans CJK SC", sans-serif;
}
.brand strong, .brand span { display: block; white-space: nowrap; }
.brand strong { font-size: 31px; line-height: 36px; font-weight: 500; }
.brand span { font-size: 26px; line-height: 26px; }
```
